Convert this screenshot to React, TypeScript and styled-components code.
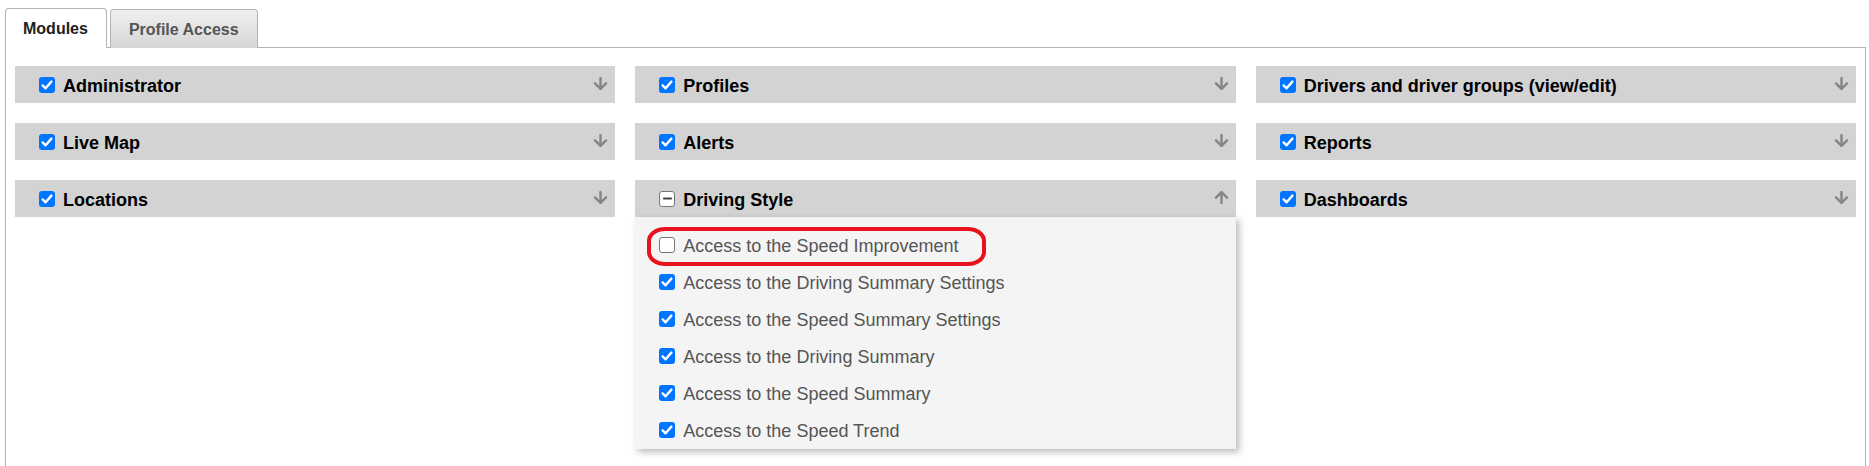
import React from "react";
import styled, { createGlobalStyle } from "styled-components";

const GlobalStyle = createGlobalStyle`
  html, body { margin: 0; padding: 0; background: #ffffff; }
  body { font-family: "Liberation Sans", Arial, sans-serif; }
  * { box-sizing: border-box; }
`;

const Page = styled.div`
  padding: 8px 3px 0 5px;
`;

const TabList = styled.div`
  display: flex;
  align-items: flex-end;
  gap: 3px;
  height: 40px;
  margin-bottom: -1px;
`;

const Tab = styled.div<{ $active?: boolean }>`
  position: relative;
  z-index: ${(p) => (p.$active ? 1 : 0)};
  height: ${(p) => (p.$active ? "40px" : "39px")};
  display: flex;
  align-items: center;
  padding-left: ${(p) => (p.$active ? "17px" : "18px")};
  padding-right: ${(p) => (p.$active ? "18px" : "18px")};
  padding-top: 1px;
  padding-bottom: ${(p) => (p.$active ? "1px" : "0")};
  border: 1px solid #b3b3b3;
  border-bottom: none;
  border-radius: 4px 4px 0 0;
  background: ${(p) =>
    p.$active ? "#ffffff" : "linear-gradient(#f0f0f0, #d6d6d6)"};
  color: ${(p) => (p.$active ? "#1e1e1e" : "#555555")};
  font-size: 16px;
  font-weight: bold;
  white-space: nowrap;
`;

const Content = styled.div`
  border: 1px solid #b3b3b3;
  border-bottom: none;
  padding: 18px 9px 40px;
  display: grid;
  grid-template-columns: repeat(3, 1fr);
  column-gap: 20px;
  align-items: start;
`;

const Column = styled.div`
  display: flex;
  flex-direction: column;
  gap: 20px;
`;

const Module = styled.div`
  display: flex;
  flex-direction: column;
`;

const Bar = styled.div`
  height: 37px;
  background: #d3d3d3;
  display: flex;
  align-items: center;
  gap: 8px;
  padding: 0 7px 0 24px;
`;

const BarTitle = styled.span`
  flex: 1;
  padding-top: 3px;
  font-size: 18px;
  font-weight: bold;
  color: #000000;
  white-space: nowrap;
`;

const Panel = styled.div`
  background: #f4f4f4;
  padding: 9px 0 1px 24px;
  box-shadow: 3px 3px 7px rgba(0, 0, 0, 0.28);
`;

const Item = styled.div`
  position: relative;
  height: 37px;
  display: flex;
  align-items: center;
  gap: 8px;
`;

const ItemLabel = styled.span`
  padding-top: 4px;
  font-size: 18px;
  color: #555555;
  white-space: nowrap;
`;

const Highlight = styled.span`
  position: absolute;
  left: -12px;
  top: 1px;
  width: 339px;
  height: 39px;
  border: 4px solid #e8121d;
  border-radius: 18px / 14px;
  pointer-events: none;
`;

const Box = styled.span<{ $state: "on" | "off" | "mixed" }>`
  flex: none;
  width: 16px;
  height: 16px;
  border-radius: 3px;
  display: inline-flex;
  align-items: center;
  justify-content: center;
  background: ${(p) => (p.$state === "on" ? "#0075ff" : "#ffffff")};
  border: ${(p) => (p.$state === "on" ? "none" : "1.5px solid #767676")};
`;

const ArrowIcon = styled.svg`
  flex: none;
  width: 15px;
  height: 13px;
  margin-top: -2px;
`;

type State = "on" | "off" | "mixed";

const Checkbox = ({ state }: { state: State }) => (
  <Box $state={state}>
    {state === "on" && (
      <svg width="16" height="16" viewBox="0 0 16 16">
        <path
          d="M3.6 8.4 L6.6 11.3 L12.4 4.6"
          fill="none"
          stroke="#ffffff"
          strokeWidth="2.4"
          strokeLinecap="round"
          strokeLinejoin="round"
        />
      </svg>
    )}
    {state === "mixed" && (
      <svg width="13" height="13" viewBox="0 0 13 13">
        <path d="M3 6.5 H10" stroke="#444" strokeWidth="2.2" strokeLinecap="round" />
      </svg>
    )}
  </Box>
);

const Arrow = ({ up }: { up?: boolean }) => (
  <ArrowIcon viewBox="0 0 15 13">
    <g
      transform={up ? "rotate(180 7.5 6.5)" : undefined}
      fill="none"
      stroke="#858585"
      strokeWidth="2.4"
      strokeLinecap="round"
      strokeLinejoin="round"
    >
      <path d="M7.5 1 V11.6" />
      <path d="M2 6.4 L7.5 11.8 L13 6.4" />
    </g>
  </ArrowIcon>
);

type Mod = { title: string; state: State; open?: boolean; items?: { label: string; on: boolean; mark?: boolean }[] };

const columns: Mod[][] = [
  [
    { title: "Administrator", state: "on" },
    { title: "Live Map", state: "on" },
    { title: "Locations", state: "on" },
  ],
  [
    { title: "Profiles", state: "on" },
    { title: "Alerts", state: "on" },
    {
      title: "Driving Style",
      state: "mixed",
      open: true,
      items: [
        { label: "Access to the Speed Improvement", on: false, mark: true },
        { label: "Access to the Driving Summary Settings", on: true },
        { label: "Access to the Speed Summary Settings", on: true },
        { label: "Access to the Driving Summary", on: true },
        { label: "Access to the Speed Summary", on: true },
        { label: "Access to the Speed Trend", on: true },
      ],
    },
  ],
  [
    { title: "Drivers and driver groups (view/edit)", state: "on" },
    { title: "Reports", state: "on" },
    { title: "Dashboards", state: "on" },
  ],
];

export default function App() {
  return (
    <Page>
      <GlobalStyle />
      <TabList>
        <Tab $active>Modules</Tab>
        <Tab>Profile Access</Tab>
      </TabList>
      <Content>
        {columns.map((col, ci) => (
          <Column key={ci}>
            {col.map((m) => (
              <Module key={m.title}>
                <Bar>
                  <Checkbox state={m.state} />
                  <BarTitle>{m.title}</BarTitle>
                  <Arrow up={m.open} />
                </Bar>
                {m.open && m.items && (
                  <Panel>
                    {m.items.map((it) => (
                      <Item key={it.label}>
                        {it.mark && <Highlight />}
                        <Checkbox state={it.on ? "on" : "off"} />
                        <ItemLabel>{it.label}</ItemLabel>
                      </Item>
                    ))}
                  </Panel>
                )}
              </Module>
            ))}
          </Column>
        ))}
      </Content>
    </Page>
  );
}
